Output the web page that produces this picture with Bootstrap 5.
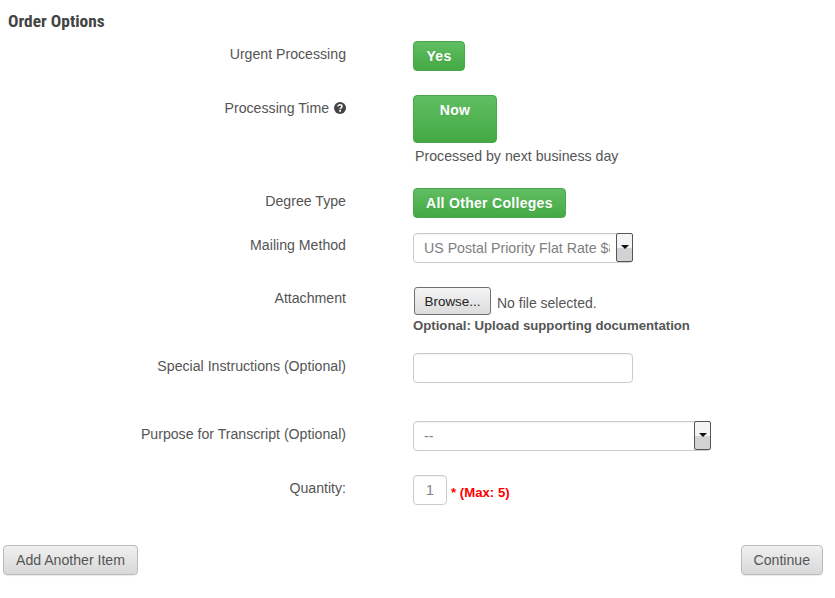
<!DOCTYPE html>
<html lang="en">
<head>
<meta charset="utf-8">
<title>Order Options</title>
<link href="https://cdn.jsdelivr.net/npm/bootstrap@5.3.0/dist/css/bootstrap.min.css" rel="stylesheet">
<style>
html,body{height:598px;overflow:hidden}
body{font-family:"Liberation Sans",Arial,sans-serif;font-size:14.2px;color:#555;background:#fff}
.page-wrap{padding:0 12px 0 3px;position:relative}
.sect-title{font-family:"Liberation Sans Narrow","Roboto Condensed",Roboto,sans-serif;font-weight:700;font-size:17.4px;line-height:20px;color:#444;margin:0;padding:11px 0 0 5px;height:41px}
.opt-row{display:grid;grid-template-columns:343px 1fr;column-gap:67px}
.opt-label{text-align:right;line-height:20px;padding-top:3px;margin:0;color:#555;font-size:14.15px}
.opt-label.lift-1{padding-top:2px}
.opt-label.lift-2{padding-top:1px}
.ctl{min-width:0}
.btn.green-btn{background:linear-gradient(#60be62,#44a944);border:1px solid #49a849;color:#fff;font-weight:700;font-size:14px;letter-spacing:.3px;line-height:20px;padding:4px 12px;border-radius:4px;height:30px;min-width:52px;text-shadow:0 1px 1px rgba(0,0,0,.08)}
.btn.now-btn{width:84px;height:48px;padding:4px 0 0;display:flex;justify-content:center;align-items:flex-start}
.help-line{margin:3px 0 0 2px;line-height:20px;color:#555}
.sel-box{position:relative;width:220px}
.sel-wide{width:298px}
.form-select.plain-sel,.form-control.plain-in{height:30px;padding:4px 10px;font-size:14.2px;line-height:20px;color:#808080;border:1px solid #ccc;border-radius:4px;background-image:none;box-shadow:inset 0 1px 1px rgba(0,0,0,.05)}
.form-select.plain-sel{padding-right:22px}
.drop-arrow{position:absolute;top:0;right:0;bottom:1px;width:17px;border:1px solid #555;border-radius:2px;background:linear-gradient(#f4f4f4 50%,#d2d2d2 50%);display:flex;align-items:flex-start;justify-content:center;padding-top:11px;pointer-events:none}
.drop-arrow i{display:block;width:0;height:0;border:4px solid transparent;border-top:4px solid #111;border-bottom:0}
.file-line{display:flex;align-items:center;gap:6px;margin-left:1px;height:28px;color:#555;font-size:14px}
.file-line span{padding-top:4px}
.browse-btn{width:77px;height:28px;padding:2px 0 0;font-size:13.4px;line-height:20px;color:#222;border:1px solid #707070;border-radius:3px;background:linear-gradient(#f4f4f4,#dcdcdc)}
.opt-note{margin:3px 0 0;font-weight:700;font-size:13.2px;line-height:16px;color:#555}
.text-box{width:220px}
.qty-box{width:34px;text-align:center;padding:4px 2px!important}
.max-note{color:#f00;font-weight:700;font-size:13.2px;padding:8px 0 0 4px;line-height:20px}
.act-row{display:flex;justify-content:space-between;margin-top:40px}
.btn.grey-btn{height:30px;padding:4px 12px;font-size:14.1px;line-height:20px;color:#555;border:1px solid #bbb;border-radius:4px;background:linear-gradient(#f0f0f0,#d8d8d8);box-shadow:0 1px 1px rgba(0,0,0,.08)}
.gap-a{margin-bottom:24px}.gap-b{margin-bottom:22px}.gap-c{margin-bottom:15px}.gap-d{margin-bottom:24px}.gap-e{margin-bottom:19px}.gap-f{margin-bottom:38px}.gap-g{margin-bottom:24px}
.help-ic{vertical-align:-1px;margin-left:1px}
</style>
</head>
<body>
<div class="page-wrap">
  <h5 class="sect-title">Order Options</h5>

  <div class="opt-row gap-a">
    <label class="opt-label">Urgent Processing</label>
    <div class="ctl"><button type="button" class="btn green-btn">Yes</button></div>
  </div>

  <div class="opt-row gap-b">
    <label class="opt-label">Processing Time <svg class="help-ic" width="12" height="12" viewBox="0 0 12 12"><circle cx="6" cy="6" r="6" fill="#444"/><path d="M4 4.6C4 3.4 4.9 2.8 6 2.8S8 3.5 8 4.5C8 5.8 6.1 5.8 6.1 7.2" fill="none" stroke="#fff" stroke-width="1.5"/><rect x="5.2" y="8" width="1.8" height="1.7" fill="#fff"/></svg></label>
    <div class="ctl">
      <button type="button" class="btn green-btn now-btn">Now</button>
      <p class="help-line">Processed by next business day</p>
    </div>
  </div>

  <div class="opt-row gap-c">
    <label class="opt-label">Degree Type</label>
    <div class="ctl"><button type="button" class="btn green-btn">All Other Colleges</button></div>
  </div>

  <div class="opt-row gap-d">
    <label class="opt-label lift-1">Mailing Method</label>
    <div class="ctl">
      <div class="sel-box">
        <select class="form-select plain-sel"><option>US Postal Priority Flat Rate $8.00</option></select>
        <span class="drop-arrow"><i></i></span>
      </div>
    </div>
  </div>

  <div class="opt-row gap-e">
    <label class="opt-label lift-2">Attachment</label>
    <div class="ctl">
      <div class="file-line"><button type="button" class="btn browse-btn">Browse...</button><span>No file selected.</span></div>
      <p class="opt-note">Optional: Upload supporting documentation</p>
    </div>
  </div>

  <div class="opt-row gap-f">
    <label class="opt-label">Special Instructions (Optional)</label>
    <div class="ctl"><input type="text" class="form-control plain-in text-box"></div>
  </div>

  <div class="opt-row gap-g">
    <label class="opt-label">Purpose for Transcript (Optional)</label>
    <div class="ctl">
      <div class="sel-box sel-wide">
        <select class="form-select plain-sel"><option>--</option></select>
        <span class="drop-arrow"><i></i></span>
      </div>
    </div>
  </div>

  <div class="opt-row">
    <label class="opt-label">Quantity:</label>
    <div class="ctl d-flex">
      <input type="text" class="form-control plain-in qty-box" value="1">
      <span class="max-note">* (Max: 5)</span>
    </div>
  </div>

  <div class="act-row">
    <button type="button" class="btn grey-btn">Add Another Item</button>
    <button type="button" class="btn grey-btn">Continue</button>
  </div>
</div>
<script src="https://cdn.jsdelivr.net/npm/bootstrap@5.3.0/dist/js/bootstrap.bundle.min.js"></script>
</body>
</html>
